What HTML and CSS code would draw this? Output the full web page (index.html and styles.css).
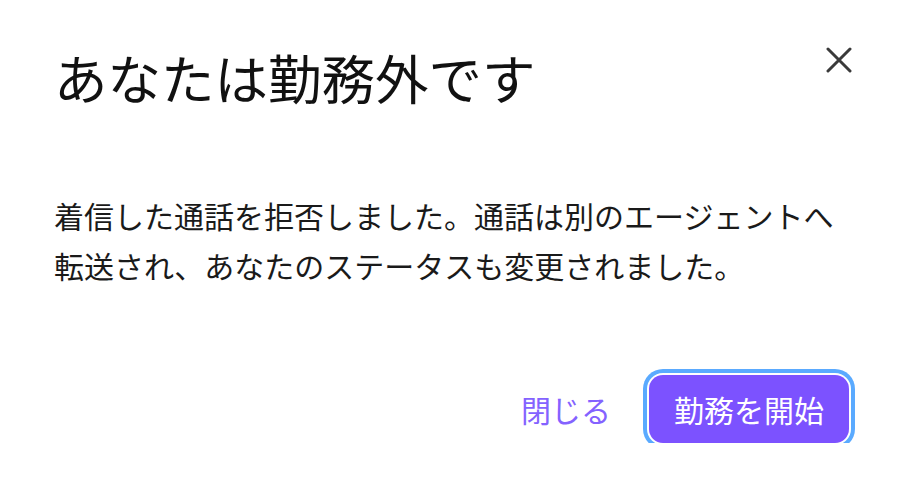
FILE: index.html
```html
<!DOCTYPE html>
<html lang="ja">
<head>
<meta charset="utf-8">
<link rel="stylesheet" href="styles.css">
</head>
<body>
<div class="dialog">
  <div class="header">
    <h1 class="title">あなたは勤務外です</h1>
    <button class="close" aria-label="閉じる">
      <svg width="26" height="26" viewBox="0 0 26 26"><path d="M2 2 L24 24 M24 2 L2 24" stroke="#3a3a3a" stroke-width="3" stroke-linecap="round" fill="none"/></svg>
    </button>
  </div>
  <p class="message">着信した通話を拒否しました。通話は別のエージェントへ<br>転送され、あなたのステータスも変更されました。</p>
  <div class="footer">
    <button class="link">閉じる</button>
    <button class="primary">勤務を開始</button>
  </div>
</div>
</body>
</html>
```
FILE: styles.css
```css
html, body {
  margin: 0;
  padding: 0;
  background: #ffffff;
}
body {
  font-family: "Noto Sans CJK JP", "Noto Sans", sans-serif;
  color: #111111;
}
.dialog {
  display: flex;
  flex-direction: column;
  padding: 46px 56px 0 54px;
}
.header {
  display: flex;
  justify-content: space-between;
  align-items: flex-start;
}
.title {
  margin: 0;
  font-size: 53.5px;
  font-weight: 400;
  line-height: 62px;
  letter-spacing: 0;
}
.close {
  border: 0;
  background: none;
  padding: 0;
  margin: 1px 0 0 0;
  width: 26px;
  height: 26px;
  cursor: pointer;
  display: flex;
}
.message {
  margin: 82px 0 0 0;
  font-size: 30px;
  line-height: 50px;
  color: #1a1a1a;
}
.footer {
  display: flex;
  justify-content: flex-end;
  align-items: center;
  gap: 38px;
  margin-top: 85px;
  margin-right: 3px;
}
.link {
  border: 0;
  background: none;
  padding: 0;
  font-family: inherit;
  font-size: 30px;
  color: #8462ff;
  cursor: pointer;
}
.primary {
  border: 0;
  width: 200px;
  height: 68px;
  border-radius: 14px;
  background: #7c52ff;
  color: #ffffff;
  font-family: inherit;
  font-size: 30px;
  box-shadow: 0 0 0 2px #ffffff, 0 0 0 6px #5aaaff;
  cursor: pointer;
}
```
